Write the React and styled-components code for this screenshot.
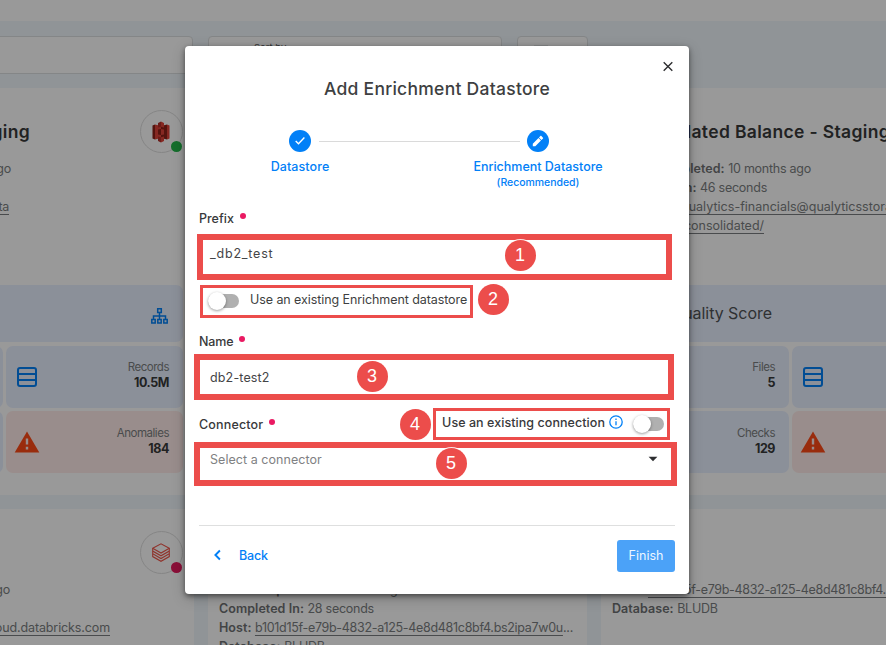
import React from 'react';
import styled, { createGlobalStyle } from 'styled-components';

const Global = createGlobalStyle`
  * { box-sizing: border-box; }
  body { margin: 0; overflow: hidden; background: #fff; font-family: Inter, "Open Sans", sans-serif; }
`;

/* ---------- page ---------- */
const Page = styled.div`
  position: relative; width: 886px; height: 645px; overflow: hidden; background: #f0f7fc;
  font-size: 12.5px; color: #7b7e80; white-space: nowrap;
`;
const TopBar = styled.header`height: 21px; background: #fff;`;
const FilterBar = styled.div`height: 67px; padding-top: 15px; display: flex; gap: 15px; margin-left: -185px;`;
const FilterBox = styled.div`
  width: ${p => p.$width}px; height: 38px; flex: none; background: #fff;
  border: 1px solid #dcdfe1; border-radius: 4px;
  padding: 5px 0 0 45px; font-size: 9.5px; line-height: 12px; color: #56595b;
`;
const FilterDash = styled.span`
  display: block; width: 14px; height: 1px; margin: 3px 0 0 -29px; background: #e4e6e8;
`;
const CardGrid = styled.main`
  display: grid; grid-template-columns: repeat(3, 379px); grid-template-rows: 407px 407px;
  gap: 14px; margin-left: -185px;
`;
const Card = styled.article`background: #fff; padding: 0 11px; overflow: hidden;`;
const CardHead = styled.div`display: flex; justify-content: space-between; height: 71px; padding-top: 22px;`;
const CardTitle = styled.h2`
  margin: 0; width: ${p => p.$width}px; display: flex; justify-content: flex-end; flex: none;
  font-size: 17.5px; line-height: 44px; font-weight: 600; letter-spacing: .34px; color: #38393a;
`;
const Avatar = styled.div`
  position: relative; width: 43px; height: 43px; flex: none; border: 1px solid #dedede; border-radius: 50%;
  display: flex; align-items: center; justify-content: center; margin-left: auto; padding-right: 1px;
`;
const Status = styled.i`
  position: absolute; right: 0; bottom: 0; width: 11px; height: 11px; border-radius: 50%;
  background: ${p => p.$color};
`;
const Lines = styled.div`height: 126px;`;
const Line = styled.div`
  height: 19px; line-height: 20px; display: flex; gap: 3.5px; letter-spacing: -.25px;
  width: ${p => (p.$end ? p.$end + 'px' : 'auto')};
  justify-content: ${p => (p.$end ? 'flex-end' : 'flex-start')};
  padding-left: ${p => p.$lead || 0}px;
  b { font-weight: 600; letter-spacing: .05px; color: #6f7274; }
`;
const Link = styled.span`
  text-decoration: underline; text-underline-offset: 2.5px; letter-spacing: ${p => p.$track ?? -0.3}px;
`;
const Score = styled.div`
  height: 57px; border-radius: 7px; background: #e8f0ff; display: flex; align-items: center;
  padding: 0 15px 2px 59px; justify-content: space-between; font-size: 16px; letter-spacing: -.05px; color: #505355;
  svg { margin-top: 7px; }
`;
const Tiles = styled.div`display: grid; grid-template-columns: 177px 177px; grid-auto-rows: 62px; gap: 3px; margin-top: 4px;`;
const Tile = styled.div`
  border-radius: 7px; background: ${p => (p.$alert ? '#ffece9' : '#e8f0ff')};
  display: flex; align-items: center; justify-content: space-between; padding: 0 14px 0 ${p => (p.$alert ? 8 : 10)}px;
`;
const Figure = styled.div`
  text-align: right; font-size: 11.5px; line-height: 15px; letter-spacing: -.48px; color: #7b7e80;
  margin-top: ${p => (p.$lower ? -2 : -4)}px;
  b { display: block; font-size: 12.5px; letter-spacing: -.45px; color: #38393a; }
`;
const Scrim = styled.div`position: absolute; inset: 0; background: rgba(0, 0, 0, .4);`;

/* ---------- dialog ---------- */
const Dialog = styled.section`
  position: absolute; left: 185px; top: 46px; width: 504px; height: 548px; padding: 0 14px;
  background: #fff; border-radius: 4px; color: #3e3f41;
  box-shadow: 0 2px 5px rgba(0, 0, 0, .45), 0 4px 14px rgba(0, 0, 0, .22);
`;
const CloseRow = styled.div`height: 30px; padding: 15px 1px 0; display: flex; justify-content: flex-end;`;
const DialogTitle = styled.h1`
  margin: 0; text-align: center; font-size: 17.5px; line-height: 26px; font-weight: 500; letter-spacing: .27px;
`;
const Stepper = styled.div`
  display: flex; justify-content: center; height: 107px; padding: 28px 1px 0 0;
`;
const Step = styled.div`
  width: ${p => p.$width}px; display: flex; flex-direction: column; align-items: center; flex: none;
  color: #0280f7; font-weight: 500; letter-spacing: ${p => p.$track || 0}px;
  small { font-size: 10.5px; line-height: 14px; letter-spacing: -.04px; }
`;
const Dot = styled.div`
  width: 22px; height: 22px; border-radius: 50%; background: #0280f7; margin-bottom: 6px;
  display: flex; align-items: center; justify-content: center;
`;
const StepLabel = styled.span`line-height: 18px;`;
const StepLine = styled.div`width: 201px; height: 1px; margin: 11px -46px 0 -10px; background: #dadada; flex: none;`;
const Label = styled.label`
  display: flex; align-items: center; gap: 6px; height: ${p => p.$height}px; font-weight: 500;
  letter-spacing: ${p => p.$track || 0}px; color: #38393b;
  &::after { content: ""; width: 6px; height: 6px; border-radius: 50%; background: #ea1a62; margin-top: -5px; }
`;
const Field = styled.div`
  height: ${p => p.$height}px; padding: 0 17px ${p => p.$lift || 0}px 11px;
  display: flex; align-items: center; justify-content: space-between;
  letter-spacing: ${p => p.$track || 0}px; color: ${p => (p.$empty ? '#7f8183' : '#444547')};
`;
const SwitchRow = styled.div`
  height: 38px; display: flex; align-items: center; padding: 0 0 2px 9px; gap: 11px; letter-spacing: -.08px;
`;
const Track = styled.span`
  width: 31px; height: 14px; border-radius: 7px; background: #b0b0b0; flex: none;
  display: flex; align-items: center; margin-top: ${p => p.$drop || 0}px;
  &::before {
    content: ""; width: 18px; height: 18px; border-radius: 50%; background: #fff;
    box-shadow: 0 1px 3px rgba(0, 0, 0, .4);
  }
`;
const ConnectorHead = styled.div`
  height: 39px; margin-top: 14px; display: flex; align-items: center; justify-content: space-between;
`;
const Existing = styled.div`
  display: flex; align-items: center; font-weight: 500; letter-spacing: .06px; margin: -4px 11px 0 0; color: #38393b;
  svg { margin: -1px 10px 0 4px; }
`;
const Footer = styled.footer`
  margin-top: 35px; border-top: 1px solid #dedfdf; padding-top: 14px;
  display: flex; justify-content: space-between;
`;
const BackButton = styled.button`
  border: 0; background: none; padding: 0 0 2px 14px; height: 32px; display: flex; align-items: center; gap: 17px;
  font: 500 12.5px Inter, sans-serif; letter-spacing: -.2px; color: #0280f7;
`;
const FinishButton = styled.button`
  border: 0; width: 58px; height: 32px; border-radius: 3px; background: #4ba2f8; padding: 0 0 2px;
  font: 400 12.5px Inter, sans-serif; color: #edf6ff;
`;

/* ---------- callouts over the dialog ---------- */
const Outline = styled.div`
  position: absolute; left: ${p => p.$x}px; top: ${p => p.$y}px; width: ${p => p.$w}px; height: ${p => p.$h}px;
  border: ${p => p.$line}px solid #ec4d4b;
`;
const Badge = styled.div`
  position: absolute; left: ${p => p.$x - 15.5}px; top: ${p => p.$y - 15.5}px; width: 31px; height: 31px;
  border-radius: 50%; background: #ec4d4b; color: #fff; box-shadow: 0 0 0 1px rgba(255, 255, 255, .85);
  font: 18px/31px "Liberation Sans", sans-serif; text-align: center;
`;

/* ---------- icons ---------- */
const BucketIcon = () => (
  <svg width="18" height="22" viewBox="0 0 18 22">
    <path d="M0.5 4.5 3 3.5v15L.5 17.5z" fill="#8c2219" />
    <path d="M3 3.5 9 5v12l-6 1.5z" fill="#e0443a" />
    <path d="M17.5 4.5 15 3.5v15l2.5-1z" fill="#e0443a" />
    <path d="M15 3.5 9 5v12l6 1.5z" fill="#8c2219" />
    <path d="M9 .5 6 2v4.500l3-.7zM9 21.500 6 20v-4.500l3 .7z" fill="#b3302a" />
    <path d="M9 .5 12 2v4.500l-3-.7zM9 21.500l3-1.500v-4.500l-3 .7z" fill="#e0443a" />
    <path d="M6 8.500 9 8v6l-3-.5z" fill="#8c2219" />
    <path d="M12 8.500 9 8v6l3-.5z" fill="#e0443a" />
  </svg>
);
const LayersIcon = () => (
  <svg width="18" height="19" viewBox="0 0 18 19" fill="none" stroke="#f0564a" strokeWidth="1.1">
    <path d="M.7 5.300 9 .8l8.300 4.500L9 10z" />
    <path d="M.7 5.300v2.800L9 12.800l8.300-4.700V5.300" />
    <path d="M.7 8.200v2.600L9 15.500l8.300-4.700V8.200" />
    <path d="M.7 11v2.600L9 18.300l8.300-4.700V11" />
  </svg>
);
const SitemapIcon = () => (
  <svg width="17" height="16" viewBox="0 0 17 16" fill="none" stroke="#0280f7" strokeWidth="1.5">
    <path d="M6.7.8h3.600v3.600H6.700zM.8 11.600h3.400v3.400H.8zM6.800 11.600h3.400v3.400H6.800zM12.800 11.600h3.400v3.400h-3.400zM8.500 4.400v7.200M2.500 11.600V8h12v3.600" />
  </svg>
);
const RowsIcon = () => (
  <svg width="22" height="22" viewBox="0 0 22 22" fill="none" stroke="#0280f7" strokeWidth="2">
    <rect x="2" y="2" width="18" height="18" rx="2" />
    <path d="M2 8h18M2 14h18" />
  </svg>
);
const AlertIcon = () => (
  <svg width="26" height="22" viewBox="0 0 26 22">
    <path d="M13 .5 25.300 21.500H.7z" fill="#ff4a17" />
    <path d="M13 7.500v6M13 15.800v2.700" stroke="#ffece9" strokeWidth="2.4" />
  </svg>
);
const CloseIcon = () => (
  <svg width="12" height="12" viewBox="0 0 12 12" stroke="#2d2e30" strokeWidth="1.4"><path d="M1.700 1.200l8.600 8.600M10.300 1.200 1.700 9.800" /></svg>
);
const CheckIcon = () => (
  <svg width="12" height="12" viewBox="0 0 12 12" fill="none" stroke="#fff" strokeWidth="1.4"><path d="M1.700 5.900 4.500 8.700 10.400 2.600" /></svg>
);
const PencilIcon = () => (
  <svg width="12" height="12" viewBox="0 0 12 12" fill="#fff">
    <path d="M.8 8.700V11.200h2.500l5.700-5.700-2.500-2.500zM11 3.600c.27-.27.27-.7 0-.95L9.350 1c-.27-.27-.7-.27-.95 0L7 2.500l2.500 2.500z" />
  </svg>
);
const InfoIcon = () => (
  <svg width="14" height="14" viewBox="0 0 14 14" fill="none" stroke="#0280f7" strokeWidth="1.3">
    <circle cx="7" cy="7" r="6.2" /><path d="M7 6.300v4M7 3.600v1.500" />
  </svg>
);
const CaretIcon = () => (
  <svg width="10" height="6" viewBox="0 0 10 6" fill="#2d2e30"><path d="M.6.7h8.800L5 5.200z" /></svg>
);
const BackIcon = () => (
  <svg width="9" height="12" viewBox="0 0 9 12" fill="none" stroke="#0280f7" strokeWidth="1.9"><path d="M6.900 1.500 2.400 6l4.500 4.500" /></svg>
);

function Stats({ files, records, checks, anomalies }) {
  return (
    <>
      <Score>Quality Score<SitemapIcon /></Score>
      <Tiles>
        <Tile><RowsIcon /><Figure>Files<b>{files}</b></Figure></Tile>
        <Tile><RowsIcon /><Figure>Records<b>{records}</b></Figure></Tile>
        <Tile><RowsIcon /><Figure $lower>Checks<b>{checks}</b></Figure></Tile>
        <Tile $alert><AlertIcon /><Figure $lower>Anomalies<b>{anomalies}</b></Figure></Tile>
      </Tiles>
    </>
  );
}

export default function App() {
  return (
    <Page>
      <Global />
      <TopBar />
      <FilterBar>
        <FilterBox $width={378} />
        <FilterBox $width={293.5}>Sort by</FilterBox>
        <FilterBox $width={71}><FilterDash /></FilterBox>
      </FilterBar>
      <CardGrid>
        <Card>
          <CardHead>
            <CardTitle $width={204}>Staging</CardTitle>
            <Avatar><BucketIcon /><Status $color="#24b74a" /></Avatar>
          </CardHead>
          <Lines>
            <Line $end={185}>10 months ago</Line>
            <Line />
            <Line $end={183}><Link>data</Link></Line>
          </Lines>
          <Stats files="5" records="10.5M" checks="129" anomalies="184" />
        </Card>
        <Card />
        <Card>
          <CardHead><CardTitle $width={278}>Consolidated Balance - Staging</CardTitle></CardHead>
          <Lines>
            <Line $end={199}><b>Completed:</b>10 months ago</Line>
            <Line $end={155}><b>Completed In:</b>46 seconds</Line>
            <Line $lead={69}><Link $track={0.02}>qualytics-financials@qualyticsstorage</Link></Line>
            <Line $end={152}><Link $track={-0.02}>consolidated/</Link></Line>
          </Lines>
          <Stats files="5" records="10.5M" checks="129" anomalies="184" />
        </Card>
        <Card>
          <CardHead><Avatar><LayersIcon /><Status $color="#e61a5e" /></Avatar></CardHead>
          <Lines>
            <Line $end={184}>10 months ago</Line>
            <Line />
            <Line $end={284}><Link $track={-0.12}>cloud.databricks.com</Link></Line>
          </Lines>
        </Card>
        <Card>
          <CardHead />
          <Lines>
            <Line><b>Last Completed:</b>10 months ago</Line>
            <Line><b>Completed In:</b>28 seconds</Line>
            <Line><b>Host:</b><span><Link $track={-0.3}>b101d15f-e79b-4832-a125-4e8d481c8bf4.bs2ipa7w0u</Link>...</span></Line>
            <Line><b>Database:</b>BLUDB</Line>
          </Lines>
        </Card>
        <Card>
          <CardHead />
          <Lines>
            <Line><b>Host:</b><Link $track={-0.32}>b101d15f-e79b-4832-a125-4e8d481c8bf4.bs2ipa7w0u</Link></Line>
            <Line><b>Database:</b>BLUDB</Line>
          </Lines>
        </Card>
      </CardGrid>
      <Scrim />

      <Dialog>
        <CloseRow><CloseIcon /></CloseRow>
        <DialogTitle>Add Enrichment Datastore</DialogTitle>
        <Stepper>
          <Step $width={58} $track={0.09}><Dot><CheckIcon /></Dot><StepLabel>Datastore</StepLabel></Step>
          <StepLine />
          <Step $width={128} $track={-0.01}>
            <Dot><PencilIcon /></Dot><StepLabel>Enrichment Datastore</StepLabel><small>(Recommended)</small>
          </Step>
        </Stepper>
        <Label $height={19}>Prefix</Label>
        <Field $height={53} $lift={2} $track={0.8}>_db2_test</Field>
        <SwitchRow><Track $drop={3} />Use an existing Enrichment datastore</SwitchRow>
        <Label $height={45} $track={-0.15}>Name</Label>
        <Field $height={27} $track={0.15}>db2-test2</Field>
        <ConnectorHead>
          <Label $height={39} $track={0.16}>Connector</Label>
          <Existing>Use an existing connection<InfoIcon /><Track $drop={3} /></Existing>
        </ConnectorHead>
        <Field $height={46} $lift={16} $empty $track={0.05}>Select a connector<CaretIcon /></Field>
        <Footer>
          <BackButton><BackIcon />Back</BackButton>
          <FinishButton>Finish</FinishButton>
        </Footer>
      </Dialog>

      <Outline $x={197} $y={233.5} $w={475} $h={46} $line={6} />
      <Outline $x={200.4} $y={285} $w={273} $h={33} $line={3} />
      <Outline $x={194} $y={354.4} $w={480} $h={46} $line={6} />
      <Outline $x={433.4} $y={408} $w={236.6} $h={32} $line={3} />
      <Outline $x={194} $y={442.4} $w={483} $h={43.5} $line={6} />
      <Badge $x={520} $y={255.5}>1</Badge>
      <Badge $x={493} $y={299.5}>2</Badge>
      <Badge $x={372} $y={376.5}>3</Badge>
      <Badge $x={415} $y={424.5}>4</Badge>
      <Badge $x={451} $y={463.5}>5</Badge>
    </Page>
  );
}
